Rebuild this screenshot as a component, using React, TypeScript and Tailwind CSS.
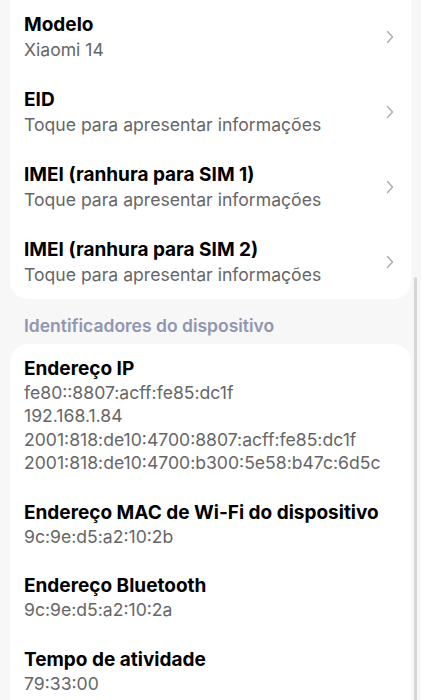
const rows = [
  { title: "Modelo", value: "Xiaomi 14" },
  { title: "EID", value: "Toque para apresentar informações" },
  { title: "IMEI (ranhura para SIM 1)", value: "Toque para apresentar informações" },
  { title: "IMEI (ranhura para SIM 2)", value: "Toque para apresentar informações" },
];

const ids = [
  {
    title: "Endereço IP",
    values: [
      "fe80::8807:acff:fe85:dc1f",
      "192.168.1.84",
      "2001:818:de10:4700:8807:acff:fe85:dc1f",
      "2001:818:de10:4700:b300:5e58:b47c:6d5c",
    ],
  },
  { title: "Endereço MAC de Wi-Fi do dispositivo", values: ["9c:9e:d5:a2:10:2b"] },
  { title: "Endereço Bluetooth", values: ["9c:9e:d5:a2:10:2a"] },
  { title: "Tempo de atividade", values: ["79:33:00"] },
];

function Chevron() {
  return (
    <svg width="8" height="14" viewBox="0 0 8 14" fill="none" className="shrink-0">
      <path d="M1.5 1.5 L6.5 7 L1.5 12.5" stroke="#a8a8a8" strokeWidth="1.3" strokeLinecap="round" strokeLinejoin="round" />
    </svg>
  );
}

export default function App() {
  return (
    <div className="relative h-[700px] w-[421px] overflow-hidden bg-[#f7f7f7] font-['Inter','Roboto',sans-serif]">
      {/* scrollbar */}
      <div className="absolute right-[4px] top-[277px] h-[440px] w-[3px] rounded-full bg-[#d6d6d6]" />

      <div className="px-[10px]">
        <div className="-mt-[1px] rounded-b-[18px] bg-white">
          {rows.map((row) => (
            <div key={row.title} className="flex items-center justify-between py-[12.5px] pl-[14px] pr-[17px]">
              <div>
                <p className="text-[19px] font-bold leading-[25px] text-black">{row.title}</p>
                <p className="text-[17.6px] leading-[25px] text-[#666666]">{row.value}</p>
              </div>
              <Chevron />
            </div>
          ))}
        </div>

        <p className="pl-[14px] pt-[15px] pb-[6px] text-[17.5px] font-semibold leading-[24px] text-[#9095b0]">
          Identificadores do dispositivo
        </p>

        <div className="rounded-[18px] bg-white pb-[10px]">
          {ids.map((item) => (
            <div key={item.title} className="pt-[11.5px] pb-[13.5px] pl-[14px] pr-[17px]">
              <p className="text-[19px] font-bold leading-[25px] text-black">{item.title}</p>
              {item.values.map((v) => (
                <p key={v} className="text-[17.6px] leading-[23.5px] text-[#666666]">
                  {v}
                </p>
              ))}
            </div>
          ))}
        </div>
      </div>
    </div>
  );
}
